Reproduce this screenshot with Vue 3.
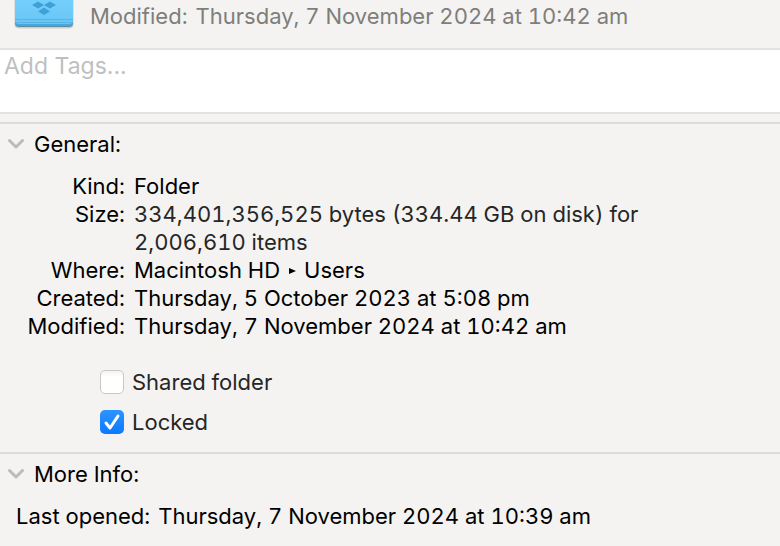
<script setup>
import { ref } from 'vue'

const shared = ref(false)
const locked = ref(true)
const tags = ref('')
const generalOpen = ref(true)
const moreOpen = ref(true)

const rows = [
  { label: 'Kind:', value: 'Folder' },
  { label: 'Size:', value: '334,401,356,525 bytes (334.44 GB on disk) for 2,006,610 items', soft: true },
  { label: 'Where:', path: ['Macintosh HD', 'Users'] },
  { label: 'Created:', value: 'Thursday, 5 October 2023 at 5:08 pm' },
  { label: 'Modified:', value: 'Thursday, 7 November 2024 at 10:42 am' },
]
</script>

<template>
  <main class="info">
    <header class="head">
      <svg class="folder" viewBox="0 0 60 30" aria-hidden="true">
        <defs>
          <linearGradient id="folder-face" x1="0" y1="0" x2="0" y2="1">
            <stop offset="0" stop-color="#74cffb" />
            <stop offset="1" stop-color="#69c5f5" />
          </linearGradient>
        </defs>
        <path d="M0.5 0H59.5V24Q59.5 28.5 55 28.5H5Q0.5 28.5 0.5 24Z" fill="#000" opacity="0.15" />
        <path d="M1 0H59V23Q59 27 55 27H5Q1 27 1 23Z" fill="#5d8ba2" />
        <path d="M1 0H59V22Q59 26 55 26H5Q1 26 1 22Z" fill="#45a9e0" />
        <path d="M1 0H59V20Q59 24 55 24H5Q1 24 1 20Z" fill="url(#folder-face)" />
        <path d="M1 19.5H59M1 22.5H59" stroke="#57b4e4" stroke-width="1" />
        <path d="M18 5L24 1.5L30 5L24 8.500ZM30 5L36 1.5L42 5L36 8.500ZM24 11.500L30 7.500L36 11.500L30 15Z" fill="#3fa0d8" />
      </svg>
      <p class="modified"><span>Modified:</span><span>Thursday, 7 November 2024 at 10:42 am</span></p>
    </header>

    <input v-model="tags" class="tags" type="text" aria-label="Add Tags" placeholder="Add Tags...">

    <section class="section">
      <h2>
        <button type="button" :aria-expanded="generalOpen" @click="generalOpen = !generalOpen">
          <svg class="chevron" viewBox="0 0 16 12" aria-hidden="true"><path d="M1.500 2.500L8 9L14.500 2.500" /></svg>General:
        </button>
      </h2>
      <template v-if="generalOpen">
        <dl class="details">
          <template v-for="row in rows" :key="row.label">
            <dt>{{ row.label }}</dt>
            <dd v-if="row.path" class="path">
              {{ row.path[0] }}<svg class="arrow" viewBox="0 0 8 8" aria-hidden="true"><path d="M1 2L8 5L1 8Z" /></svg>{{ row.path[1] }}
            </dd>
            <dd v-else :class="{ soft: row.soft }">{{ row.value }}</dd>
          </template>
        </dl>
        <div class="checks">
          <label><span class="box"><input v-model="shared" type="checkbox"><svg viewBox="0 0 24 24" aria-hidden="true"><path d="M6 13L10 18L18 6" /></svg></span>Shared folder</label>
          <label><span class="box"><input v-model="locked" type="checkbox"><svg viewBox="0 0 24 24" aria-hidden="true"><path d="M6 13L10 18L18 6" /></svg></span>Locked</label>
        </div>
      </template>
    </section>

    <section class="section">
      <h2>
        <button type="button" :aria-expanded="moreOpen" @click="moreOpen = !moreOpen">
          <svg class="chevron" viewBox="0 0 16 12" aria-hidden="true"><path d="M1.500 2.500L8 9L14.500 2.500" /></svg>More Info:
        </button>
      </h2>
      <p v-if="moreOpen" class="opened"><span>Last opened:</span><span>Thursday, 7 November 2024 at 10:39 am</span></p>
    </section>
  </main>
</template>

<style>
body {
  margin: 0;
  background: #f4f3f1;
}
</style>

<style scoped>
.info {
  font: 22px/28px Inter, "Liberation Sans", sans-serif;
  font-variant-numeric: tabular-nums;
  color: #000;
}

p, h2, dl, dd {
  margin: 0;
}

.head {
  display: flex;
  gap: 16px;
  padding: 0 14px 18px;
  border-bottom: 2px solid #e3e2e1;
}

.folder {
  flex: none;
  width: 60px;
  height: 30px;
}

.modified,
.opened {
  display: flex;
  gap: 8px;
}

.modified {
  padding-top: 2px;
  color: #7e7e7c;
}

.tags {
  display: block;
  box-sizing: border-box;
  width: 100%;
  margin: 0 0 8px;
  padding: 0 4px 30px;
  border: 0;
  border-bottom: 2px solid #e3e2e1;
  border-radius: 0;
  outline: 0;
  background: #fff;
  color: #000;
  font: 23px/32px Inter, "Liberation Sans", sans-serif;
}

.tags::placeholder {
  color: #bfbfbf;
  opacity: 1;
}

.section {
  border-top: 2px solid #dcdbda;
  padding: 6px 0 16px;
}

h2 {
  font: inherit;
}

h2 button {
  display: flex;
  align-items: center;
  gap: 10px;
  padding: 0 8px;
  border: 0;
  background: none;
  color: inherit;
  font: inherit;
}

.chevron {
  width: 16px;
  height: 12px;
  fill: none;
  stroke: #bcbbba;
  stroke-width: 3;
  stroke-linecap: round;
  stroke-linejoin: round;
}

.details {
  display: grid;
  grid-template-columns: 125px 1fr;
  column-gap: 9px;
  padding: 14px 80px 28px 0;
}

dt {
  text-align: right;
}

.soft,
.checks {
  color: #262626;
}

.path {
  display: flex;
  align-items: center;
  gap: 8px;
}

.arrow {
  width: 8px;
  height: 8px;
}

.checks {
  display: flex;
  flex-direction: column;
  align-items: flex-start;
  gap: 12px;
  padding-left: 100px;
}

.checks label {
  display: flex;
  align-items: center;
  gap: 8px;
}

.box {
  display: grid;
  width: 24px;
  height: 24px;
}

.box > * {
  grid-area: 1 / 1;
}

.box input {
  appearance: none;
  box-sizing: border-box;
  width: 24px;
  height: 24px;
  margin: 0;
  border: 1px solid #c9c8c7;
  border-radius: 5px;
  background: linear-gradient(#f3f3f3, #fff 6px);
}

.box input:checked {
  border: 0;
  background: linear-gradient(#2f93ff, #0a7aff);
}

.box svg {
  display: none;
  width: 24px;
  height: 24px;
  fill: none;
  stroke: #fff;
  stroke-width: 3;
  stroke-linecap: round;
  stroke-linejoin: round;
  pointer-events: none;
}

.box input:checked + svg {
  display: block;
}

.opened {
  padding: 14px 16px 0;
}
</style>
